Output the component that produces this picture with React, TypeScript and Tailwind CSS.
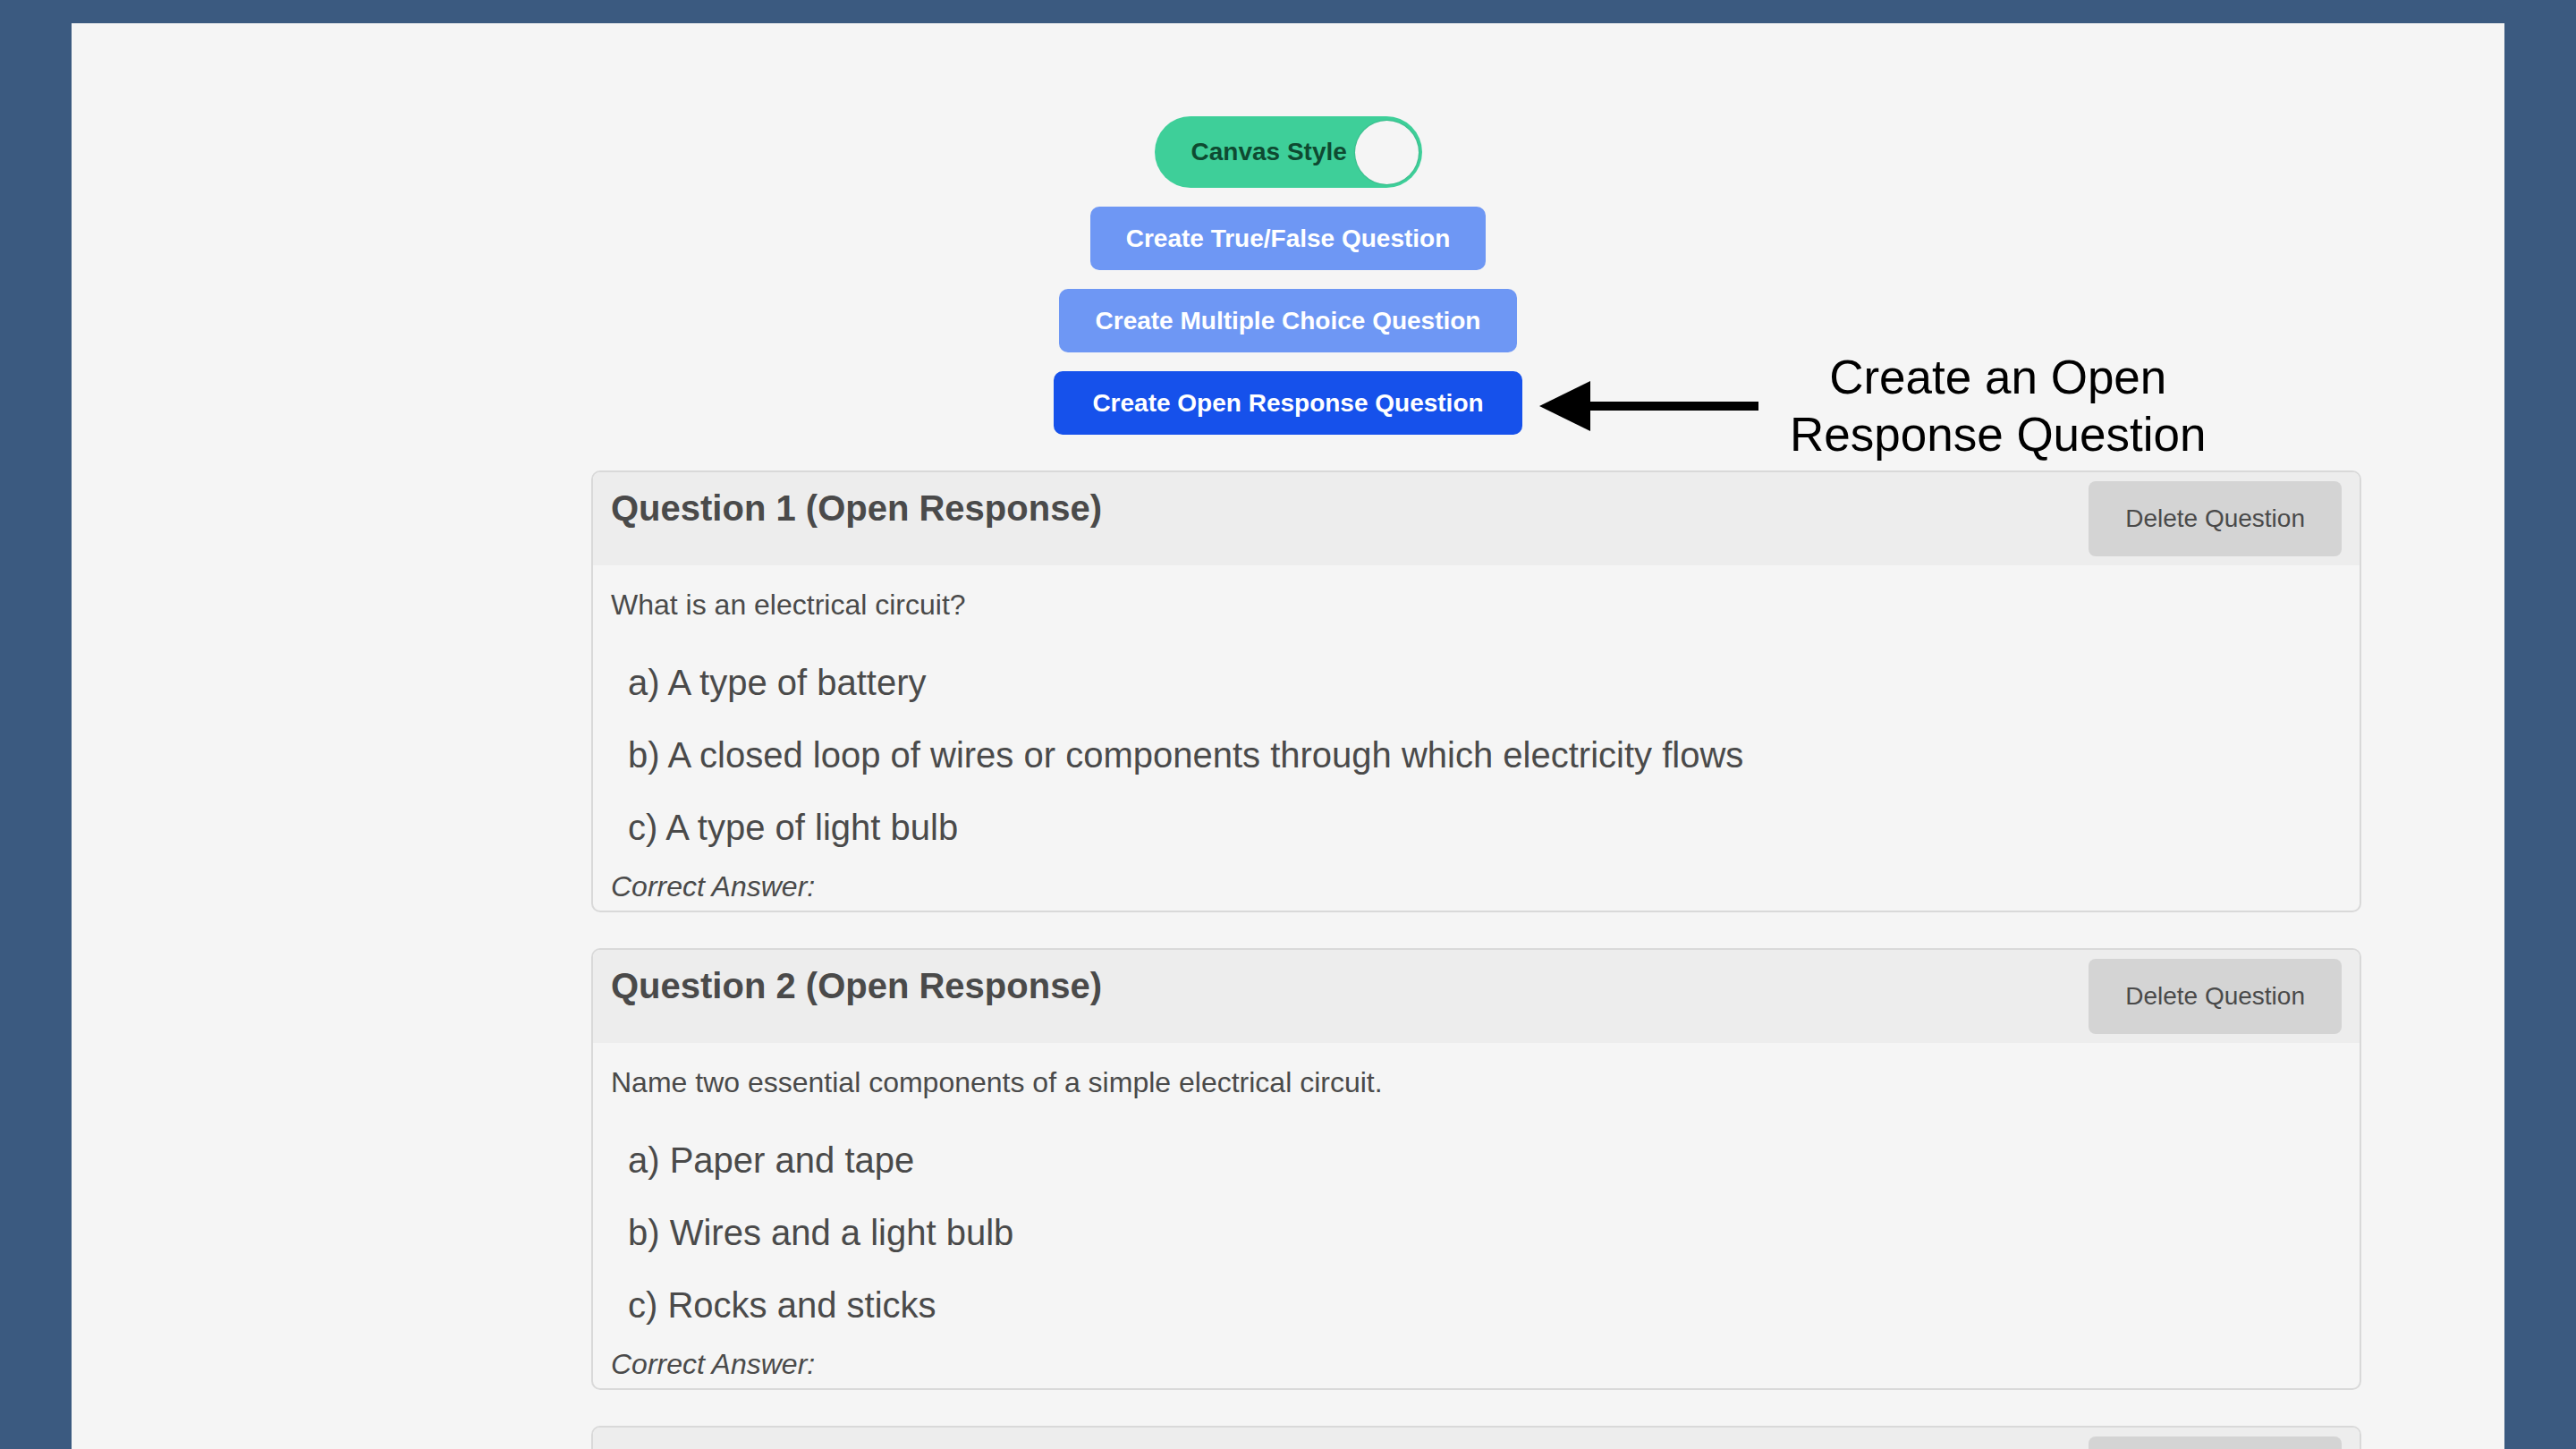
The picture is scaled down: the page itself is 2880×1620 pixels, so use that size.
import React from 'react';

interface Question {
  id: number;
  text: string;
  options: string[];
}

const questions: Question[] = [
  {
    id: 1,
    text: 'What is an electrical circuit?',
    options: [
      'a) A type of battery',
      'b) A closed loop of wires or components through which electricity flows',
      'c) A type of light bulb',
    ],
  },
  {
    id: 2,
    text: 'Name two essential components of a simple electrical circuit.',
    options: ['a) Paper and tape', 'b) Wires and a light bulb', 'c) Rocks and sticks'],
  },
  {
    id: 3,
    text: 'What does a switch do in an electrical circuit?',
    options: ['a) It stores electricity', 'b) It opens or closes the circuit', 'c) It makes the wires longer'],
  },
];

function QuestionCard({ question }: { question: Question }) {
  return (
    <div className="w-full rounded-[10px] border-2 border-[#d9d9d9] overflow-hidden shrink-0">
      <div className="flex items-start justify-between bg-[#ededed] px-[20px] py-[10px]">
        <h3 className="mt-[7px] text-[40px] font-bold leading-[46px] text-[#4a4a4a]">
          Question {question.id} (Open Response)
        </h3>
        <button className="h-[84px] rounded-[8px] bg-[#d4d4d4] px-[41px] text-[28px] text-[#4a4a4a]">
          Delete Question
        </button>
      </div>
      <div className="px-[20px] pt-[26px] pb-[8px]">
        <p className="text-[32px] leading-[37px] text-[#4a4a4a]">{question.text}</p>
        <div className="mt-[45px] flex flex-col gap-[35px] pl-[19px]">
          {question.options.map((opt) => (
            <div key={opt} className="text-[40px] leading-[46px] text-[#4a4a4a]">
              {opt}
            </div>
          ))}
        </div>
        <p className="mt-[25px] text-[32px] italic leading-[37px] text-[#4a4a4a]">Correct Answer:</p>
      </div>
    </div>
  );
}

export default function App() {
  return (
    <div
      className="h-screen w-full overflow-hidden bg-[#3b5a80] px-[80px] pt-[26px]"
      style={{ fontFamily: '"Liberation Sans", Arial, sans-serif' }}
    >
      <div className="relative flex h-full flex-col items-center bg-[#f5f5f5] pt-[104px]">
        <div className="flex flex-col items-center gap-[21px]">
          <div className="flex h-[80px] w-[299px] items-center justify-between rounded-full bg-[#3ecf99] pl-[41px] pr-[4px]">
            <span className="text-[28px] font-bold text-[#0e4a31]">Canvas Style</span>
            <span className="h-[71px] w-[71px] rounded-full bg-[#f5f5f5] shadow-[0_0_2px_rgba(0,0,0,0.25)]" />
          </div>
          <button className="h-[71px] rounded-[10px] bg-[#6e97f4] px-[40px] text-[28px] font-bold text-white">
            Create True/False Question
          </button>
          <button className="h-[71px] rounded-[10px] bg-[#6e97f4] px-[41px] text-[28px] font-bold text-white">
            Create Multiple Choice Question
          </button>
          <button className="h-[71px] rounded-[10px] bg-[#1651eb] px-[43px] text-[28px] font-bold text-white">
            Create Open Response Question
          </button>
        </div>

        <div className="mt-[40px] flex w-full flex-col gap-[40px] pl-[581px] pr-[160px]">
          {questions.map((q) => (
            <QuestionCard key={q.id} question={q} />
          ))}
        </div>

        {/* annotation */}
        <div className="absolute left-[1641px] top-[364px] flex items-center">
          <svg width="245" height="56" viewBox="0 0 245 56">
            <polygon points="0,28 57,0 57,56" fill="#000" />
            <rect x="50" y="23" width="195" height="10" fill="#000" />
          </svg>
          <div className="ml-[35px] text-center text-[53px] leading-[64px] text-black">
            Create an Open
            <br />
            Response Question
          </div>
        </div>
      </div>
    </div>
  );
}
